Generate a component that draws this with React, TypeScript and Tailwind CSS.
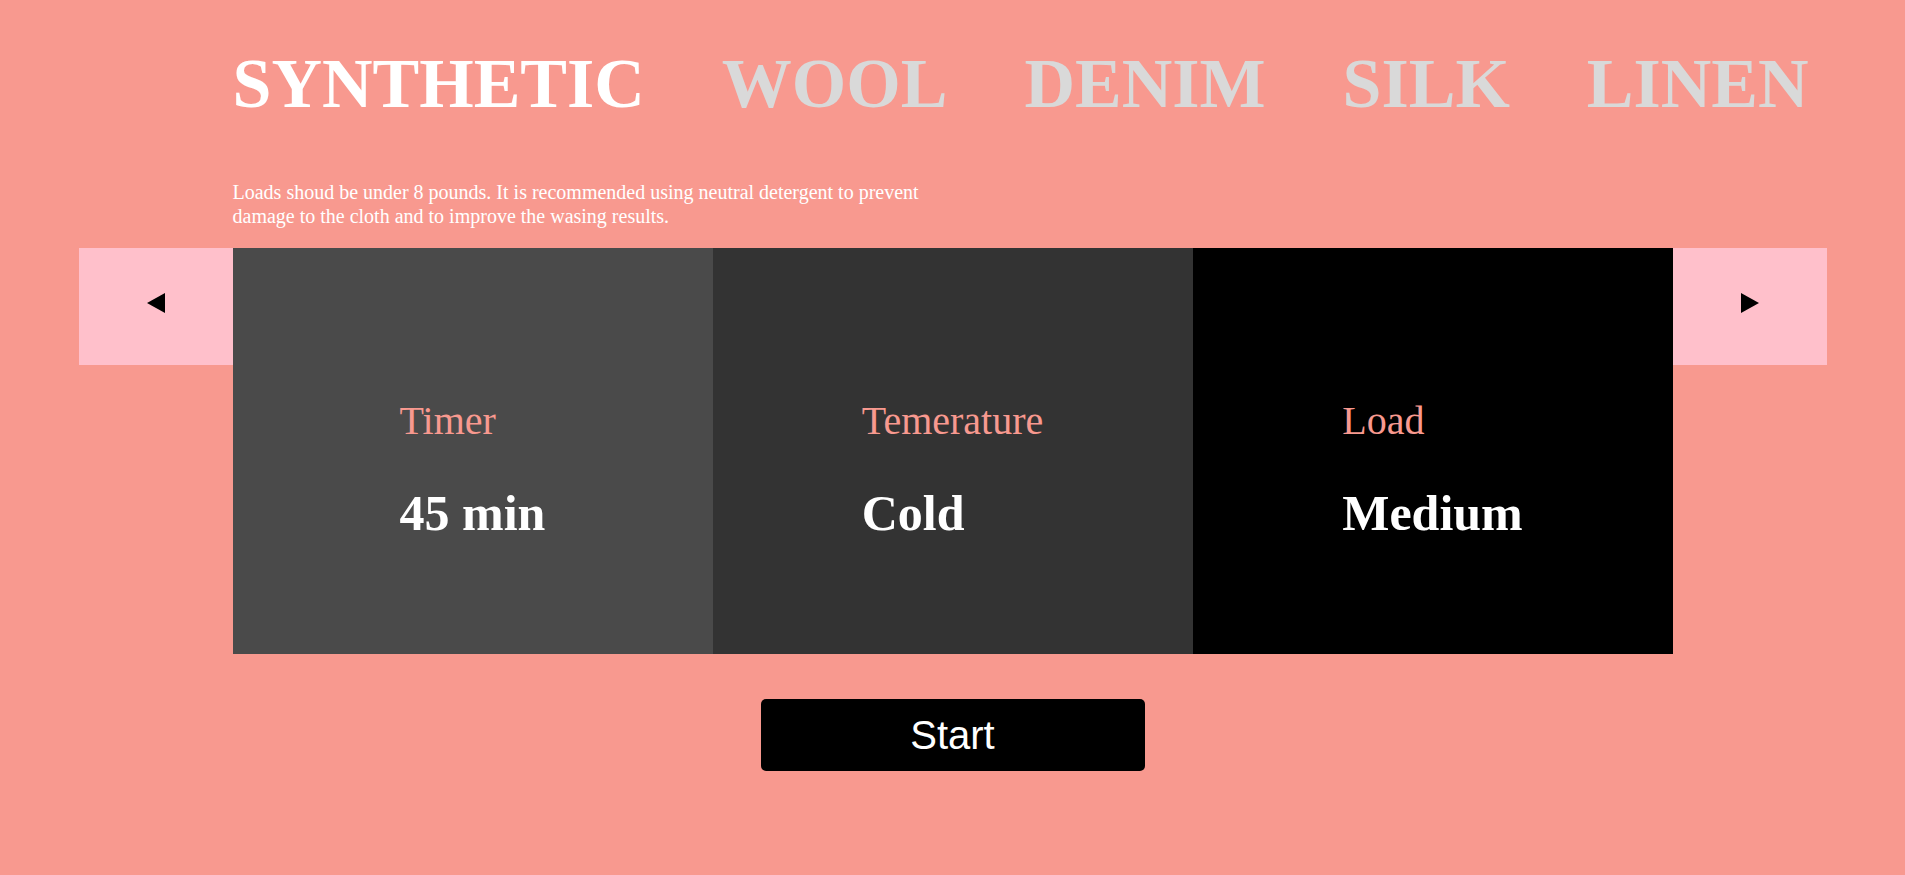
import React from "react";

const serif = { fontFamily: '"Liberation Serif", "Times New Roman", serif' };

function Panel({ bg, label, value }: { bg: string; label: string; value: string }) {
  return (
    <div className={`w-[480px] h-[406px] flex justify-center ${bg}`}>
      <div className="pt-[150px]">
        <div className="text-[40px] leading-[46px] text-[#f8998f]" style={serif}>{label}</div>
        <div className="mt-[41px] text-[50px] leading-[57px] font-bold text-white" style={serif}>{value}</div>
      </div>
    </div>
  );
}

export default function App() {
  const tabs = ["SYNTHETIC", "WOOL", "DENIM", "SILK", "LINEN"];
  return (
    <div className="w-[1905px] h-[875px] bg-[#f8998f] overflow-hidden" style={serif}>
      <div className="w-[1440px] mx-auto pt-[44px]">
        <div className="flex gap-[77px] whitespace-nowrap">
          {tabs.map((t, i) => (
            <div
              key={t}
              className={`shrink-0 text-[70px] leading-[80px] font-bold ${i === 0 ? "text-white" : "text-[#d9d9d9]"}`}
            >
              {t}
            </div>
          ))}
        </div>
        <p className="mt-[56px] w-[730px] text-[20px] leading-[24px] text-white">
          Loads shoud be under 8 pounds. It is recommended using neutral detergent to prevent damage to the cloth and to improve the wasing results.
        </p>
      </div>
      <div className="flex justify-center items-start mt-[20px]">
        <button className="w-[154px] h-[117px] pb-[7px] bg-[#ffc0cb] flex items-center justify-center">
          <svg width="18" height="20" viewBox="0 0 18 20"><polygon points="18,0 18,20 0,10" fill="#000" /></svg>
        </button>
        <Panel bg="bg-[#4a4a4a]" label="Timer" value="45 min" />
        <Panel bg="bg-[#333333]" label="Temerature" value="Cold" />
        <Panel bg="bg-[#000000]" label="Load" value="Medium" />
        <button className="w-[154px] h-[117px] pb-[7px] bg-[#ffc0cb] flex items-center justify-center">
          <svg width="18" height="20" viewBox="0 0 18 20"><polygon points="0,0 0,20 18,10" fill="#000" /></svg>
        </button>
      </div>
      <div className="flex justify-center mt-[45px]">
        <button
          className="w-[384px] h-[72px] bg-black rounded-[5px] text-white text-[40px]"
          style={{ fontFamily: '"Liberation Sans", Arial, sans-serif' }}
        >
          Start
        </button>
      </div>
    </div>
  );
}
